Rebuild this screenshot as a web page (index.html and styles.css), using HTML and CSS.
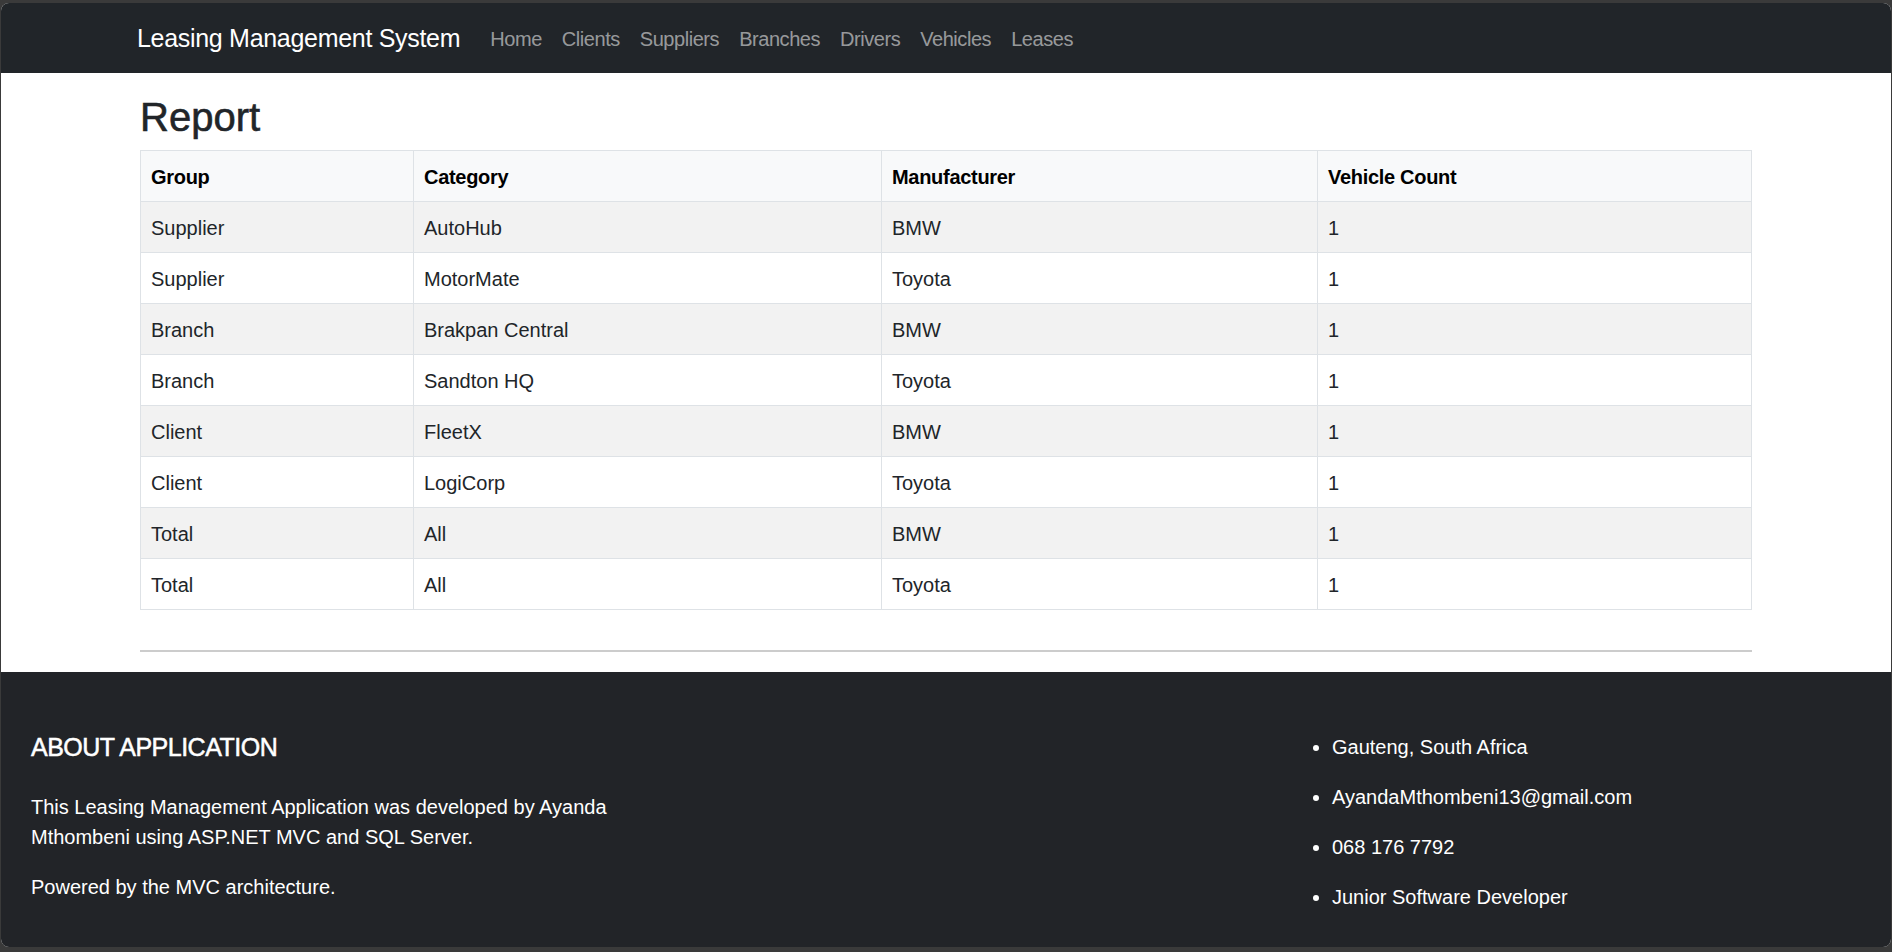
FILE: index.html
```html
<!DOCTYPE html>
<html lang="en">
<head>
<meta charset="utf-8">
<title>Report - Leasing Management System</title>
<link rel="stylesheet" href="styles.css">
</head>
<body>
<div class="window">
  <header class="navbar">
    <div class="container nav-inner">
      <a class="brand" href="#">Leasing Management System</a>
      <ul class="nav-links">
        <li><a href="#">Home</a></li>
        <li><a href="#">Clients</a></li>
        <li><a href="#">Suppliers</a></li>
        <li><a href="#">Branches</a></li>
        <li><a href="#">Drivers</a></li>
        <li><a href="#">Vehicles</a></li>
        <li><a href="#">Leases</a></li>
      </ul>
    </div>
  </header>

  <main class="container main">
    <h2 class="title">Report</h2>
    <table class="report">
      <colgroup>
        <col class="c-group">
        <col class="c-cat">
        <col class="c-man">
        <col class="c-count">
      </colgroup>
      <thead>
        <tr><th>Group</th><th>Category</th><th>Manufacturer</th><th>Vehicle Count</th></tr>
      </thead>
      <tbody>
        <tr><td>Supplier</td><td>AutoHub</td><td>BMW</td><td>1</td></tr>
        <tr><td>Supplier</td><td>MotorMate</td><td>Toyota</td><td>1</td></tr>
        <tr><td>Branch</td><td>Brakpan Central</td><td>BMW</td><td>1</td></tr>
        <tr><td>Branch</td><td>Sandton HQ</td><td>Toyota</td><td>1</td></tr>
        <tr><td>Client</td><td>FleetX</td><td>BMW</td><td>1</td></tr>
        <tr><td>Client</td><td>LogiCorp</td><td>Toyota</td><td>1</td></tr>
        <tr><td>Total</td><td>All</td><td>BMW</td><td>1</td></tr>
        <tr><td>Total</td><td>All</td><td>Toyota</td><td>1</td></tr>
      </tbody>
    </table>
    <hr class="rule">
  </main>

  <footer class="footer">
    <div class="footer-grid">
      <div class="about">
        <h5 class="footer-heading">ABOUT APPLICATION</h5>
        <p>This Leasing Management Application was developed by Ayanda Mthombeni using ASP.NET MVC and SQL Server.</p>
        <p>Powered by the MVC architecture.</p>
      </div>
      <div class="spacer"></div>
      <ul class="contact">
        <li>Gauteng, South Africa</li>
        <li>AyandaMthombeni13@gmail.com</li>
        <li>068 176 7792</li>
        <li>Junior Software Developer</li>
      </ul>
    </div>
  </footer>
</div>
</body>
</html>
```

FILE: styles.css
```css
* {
  box-sizing: border-box;
}

html, body {
  margin: 0;
  padding: 0;
}

body {
  background: #3a3a3a;
  font-family: "Liberation Sans", Arial, sans-serif;
  font-size: 20px;
  line-height: 1.5;
  color: #212529;
}

.window {
  margin: 3px 1px 5px 1px;
  height: 944px;
  background: #ffffff;
  border-radius: 8px;
  overflow: hidden;
  display: flex;
  flex-direction: column;
}

.container {
  width: 1612px;
  margin: 0 auto;
}

/* Navbar */
.navbar {
  background: #212529;
  padding: 10px 0;
  margin-bottom: 20px;
  flex: 0 0 auto;
}

.nav-inner {
  display: flex;
  align-items: center;
}

.brand {
  color: #ffffff;
  text-decoration: none;
  font-size: 25px;
  line-height: 37.5px;
  padding: 7.25px 0 5.25px 0;
  margin-right: 20px;
  margin-left: -3px;
  letter-spacing: -0.3px;
  white-space: nowrap;
}

.nav-links {
  list-style: none;
  margin: 0;
  padding: 0;
  display: flex;
}

.nav-links a {
  display: block;
  padding: 11px 10px 9px 10px;
  color: rgba(255, 255, 255, 0.55);
  text-decoration: none;
  font-size: 20px;
  line-height: 30px;
  letter-spacing: -0.45px;
}

/* Main */
.main {
  flex: 0 0 auto;
}

.title {
  margin: 0 0 9px 0;
  font-size: 40px;
  line-height: 1.2;
  font-weight: 400;
  color: #212529;
  -webkit-text-stroke: 0.6px #212529;
}

.report {
  width: 100%;
  border-collapse: collapse;
  margin-bottom: 20px;
  color: #212529;
}

.c-group { width: 273px; }
.c-cat { width: 468px; }
.c-man { width: 436px; }
.c-count { width: auto; }

.report th,
.report td {
  border: 1px solid #dee2e6;
  padding: 11px 10px 9px 10px;
  text-align: left;
  vertical-align: top;
  font-size: 20px;
  line-height: 30px;
}

.report thead th {
  background: #f8f9fa;
  color: #000000;
  font-weight: 700;
  letter-spacing: -0.3px;
}

.report tbody tr:nth-child(odd) td {
  background: #f2f2f2;
}

.rule {
  margin: 40px 0 20px 0;
  border: 0;
  border-top: 2px solid #cccccc;
  height: 0;
}

/* Footer */
.footer {
  flex: 1 1 auto;
  background: #222428;
  color: #ffffff;
}

.footer-grid {
  display: grid;
  grid-template-columns: 600px 1fr 569px;
  padding: 60px 30px 0 30px;
}

.footer-heading {
  margin: 0 0 30px 0;
  font-size: 25px;
  line-height: 30px;
  font-weight: 400;
  letter-spacing: -0.5px;
  -webkit-text-stroke: 0.5px #ffffff;
}

.about p {
  margin: 0 0 20px 0;
  font-size: 20px;
  line-height: 30px;
}

.contact {
  margin: 0;
  padding-left: 40px;
  list-style: disc;
}

.contact li {
  font-size: 20px;
  line-height: 30px;
  margin-bottom: 20px;
}
```
